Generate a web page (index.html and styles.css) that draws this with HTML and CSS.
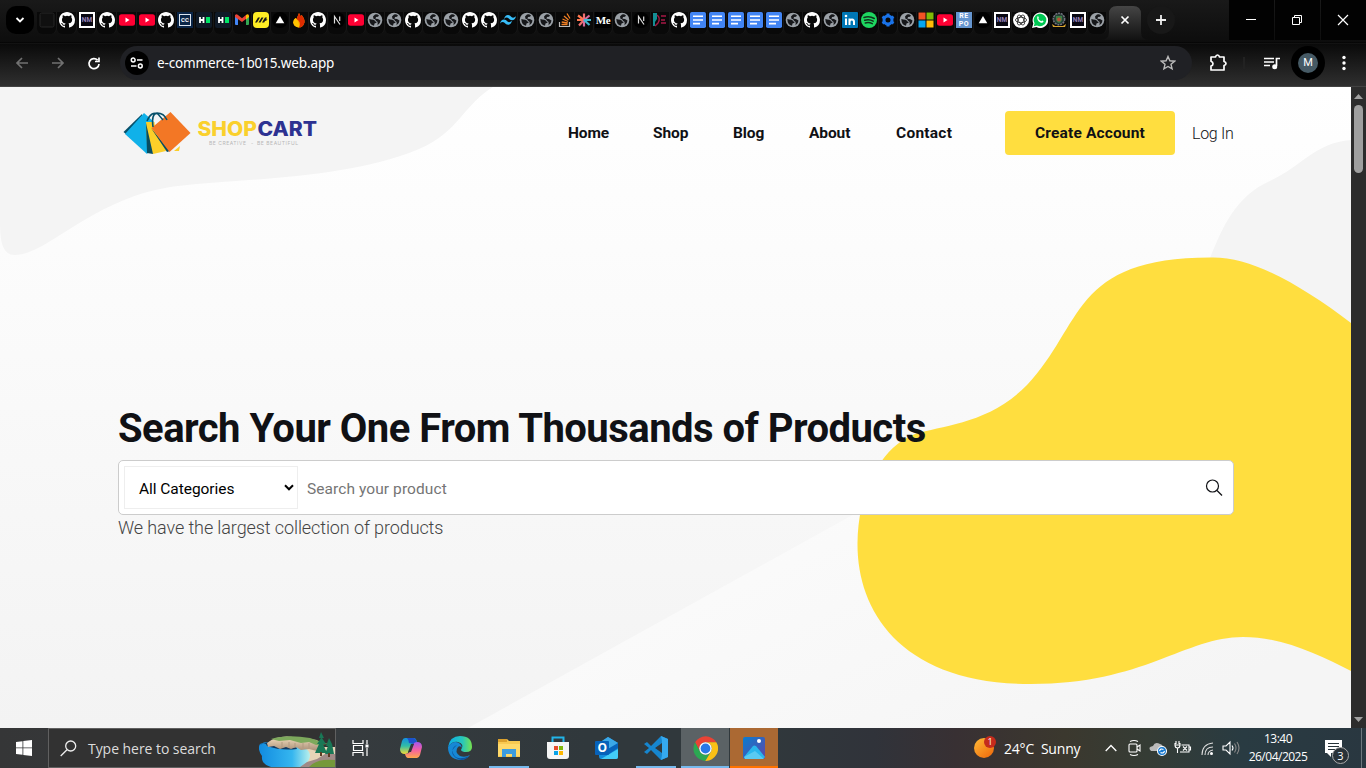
FILE: index.html
```html
<!DOCTYPE html>
<html lang="en">
<head>
<meta charset="utf-8">
<title>ShopCart</title>
<link rel="stylesheet" href="styles.css">
</head>
<body>
<svg class="defs" aria-hidden="true">
  <symbol id="gh" viewBox="0 0 16 16"><path fill="#fff" d="M8 0C3.58 0 0 3.58 0 8c0 3.54 2.29 6.53 5.47 7.59.4.07.55-.17.55-.38v-1.49c-2.01.37-2.53-.49-2.69-.94-.09-.23-.48-.94-.82-1.13-.28-.15-.68-.52-.01-.53.63-.01 1.08.58 1.23.82.72 1.21 1.87.87 2.33.66.07-.52.28-.87.51-1.07-1.78-.2-3.64-.89-3.64-3.95 0-.87.31-1.59.82-2.15-.08-.2-.36-1.02.08-2.12 0 0 .67-.21 2.2.82a7.7 7.7 0 0 1 4 0c1.53-1.04 2.2-.82 2.2-.82.44 1.1.16 1.92.08 2.12.51.56.82 1.27.82 2.15 0 3.07-1.87 3.75-3.65 3.95.29.25.54.73.54 1.48v2.19c0 .21.15.46.55.38A8 8 0 0 0 16 8c0-4.42-3.58-8-8-8z"/></symbol>
  <symbol id="globe" viewBox="0 0 16 16"><circle cx="8" cy="8" r="7.3" fill="#9aa0a6"/><path d="M2.300 7q2 .8 4 .8 1.700 0 1.700 1.500 2 0 1.500 1.500l-2 .6-.5 2.300Q2.500 13 2.300 7zM8 2.500q2-.8 4 1l-1 1.300-2 .2-.5 1.700 2.500.3 2.500 1.500q-.2 3.500-3 4.800l.2-2.600q-.2-1.500-1.700-2L8 7.200 6.500 6.700 6 4.500z" fill="#16171a"/></symbol>
  <symbol id="yt" viewBox="0 0 16 16"><rect y="2.300" width="16" height="11.500" rx="2.500" fill="#ff0033"/><path d="M6.500 5.500v5l4-2.500z" fill="#fff"/></symbol>
  <symbol id="hh" viewBox="0 0 16 16"><rect width="16" height="16" rx="2" fill="#0f1a27"/><path d="M4 5v6M7.500 5v6M4 8h3.500" stroke="#fff" stroke-width="1.800"/><path d="M10 5h4v6h-4z" fill="#00e566"/></symbol>
  <symbol id="gmail" viewBox="0 0 16 16"><path fill="#4285f4" d="M1 3h3v10H2q-1 0-1-1z"/><path fill="#34a853" d="M12 4h3v8q0 1-1 1h-2z"/><path fill="#ea4335" d="M1 3.500Q2 1.500 4 3l4 3.200L12 3v4L8 10 1 5z"/><path fill="#fbbc04" d="m12 3q2-1.500 3 .5V5l-3 2.500z"/></symbol>
  <symbol id="yel" viewBox="0 0 16 16"><rect width="16" height="16" rx="4" fill="#ffed24"/><path d="m2 10.500 3-5h2l-3 5zm3.500 0 3-5h2l-3 5zm3.500 0 3-5h2l-1 2 1.500-.5-1 1.500-1.500.4-.8 1.600z" fill="#171717"/></symbol>
  <symbol id="tri" viewBox="0 0 16 16"><circle cx="8" cy="8" r="8" fill="#000"/><path d="M8 4l4.300 7.300H3.700z" fill="#fff"/></symbol>
  <symbol id="fire" viewBox="0 0 16 16"><path d="M8 1q1 1.500 1.200 3l1.500-1Q14 7 13.500 10.500 12 15.500 8 15.500 3 15 2.200 10.500 2.500 7 4.500 6l1 1z" fill="#ff9100"/><path d="M8 1q1 1.500 1.200 3l1.500-1Q14 7 13.500 10.500 12 15.500 8 15.500 11 10 5.500 7z" fill="#dd2c00"/><path d="M4.500 6Q9 10 8 15.500 3 15 2.200 10.500 2.500 7 4.500 6z" fill="#ffc400"/></symbol>
  <symbol id="next" viewBox="0 0 16 16"><circle cx="8" cy="8" r="8" fill="#000"/><path d="M5.500 11.500v-7L11 12.500M10.700 4.500V9" stroke="#ddd" stroke-width="1.200" fill="none"/></symbol>
  <symbol id="tw" viewBox="0 0 16 16"><path fill="#38bdf8" d="M4 7q1-4 4-4 2 0 3.500 2 1.800 1.800 4.500-.7-1 4-4 4-2 0-3.500-2Q6.500 4.500 4 7zM0 11.500q1-4 4-4 2 0 3.500 2 1.800 1.800 4.500-.7-1 4-4 4-2 0-3.500-2Q2.500 9 0 11.500z"/></symbol>
  <symbol id="so" viewBox="0 0 16 16"><path d="M2.500 10v4.500h10V10" fill="none" stroke="#bcbbbb" stroke-width="1.200"/><path d="M4.500 12.500h6M4.700 10l6 1M5.500 7l5.500 2.500M7 4l4.500 4M10 1.500l3 5" stroke="#f48024" stroke-width="1.300"/></symbol>
  <symbol id="ast" viewBox="0 0 16 16"><g stroke-width="2.200"><path d="M8 8 2 3.500M8 8H1" stroke="#ff7850"/><path d="M8 8 3 13.500M8 8V1.500" stroke="#f07070"/><path d="M8 8v6.500M8 8l5.500-4.500" stroke="#d86a9c"/><path d="M8 8h7M8 8l5.500 5" stroke="#40b6cf"/></g></symbol>
  <symbol id="duo" viewBox="0 0 16 16"><path d="M1 1h4v6l-2 3v4H1z" fill="#148e94"/><path d="M5 3q4 3 1 8l-3 3M9 4h5M9 8h4M9 11h5" stroke="#a71945" fill="none" stroke-width="1.400"/></symbol>
  <symbol id="doc" viewBox="0 0 16 16"><rect width="16" height="16" rx="1.800" fill="#4285f4"/><path d="M3 4.300h10M3 8h10M3 11.600h7" stroke="#fff" stroke-width="1.600"/></symbol>
  <symbol id="li" viewBox="0 0 16 16"><rect width="16" height="16" rx="1" fill="#0077b5"/><path d="M4 6.500V13M7.500 6.500V13M7.500 9.500Q8 7.500 10 7.500q2 0 2 2.500v3" stroke="#fff" stroke-width="2" fill="none"/><circle cx="4" cy="4" r="1.300" fill="#fff"/></symbol>
  <symbol id="sp" viewBox="0 0 16 16"><circle cx="8" cy="8" r="8" fill="#1ed760"/><path d="M3 5.500q5.500-1.700 10.300 1M3.700 8.300q4.500-1.500 8.500.9M4.300 11q3.500-1.200 7 .7" stroke="#10331c" stroke-width="1.500" fill="none" stroke-linecap="round"/></symbol>
  <symbol id="gear" viewBox="0 0 16 16"><circle cx="8" cy="8" r="4" fill="none" stroke="#1a73e8" stroke-width="3"/><path d="M6.500 1.500h3v3h-3zM6.500 11.500h3v3h-3z" fill="#1a73e8"/><path d="M6.500 1.500h3v3h-3zM6.500 11.500h3v3h-3z" fill="#1a73e8" transform="rotate(60 8 8)"/><path d="M6.500 1.500h3v3h-3zM6.500 11.500h3v3h-3z" fill="#1a73e8" transform="rotate(120 8 8)"/></symbol>
  <symbol id="ms" viewBox="0 0 16 16"><path fill="#f35325" d="M.5.5h7v7h-7z"/><path fill="#81bc06" d="M8.500.5h7v7h-7z"/><path fill="#05a6f0" d="M.5 8.500h7v7h-7z"/><path fill="#ffba08" d="M8.500 8.500h7v7h-7z"/></symbol>
  <symbol id="ai" viewBox="0 0 16 16"><circle cx="8" cy="8" r="8" fill="#fff"/><g fill="none" stroke="#222" stroke-width=".8"><ellipse cx="8" cy="8" rx="5.500" ry="2.700"/><ellipse cx="8" cy="8" rx="5.500" ry="2.700" transform="rotate(60 8 8)"/><ellipse cx="8" cy="8" rx="5.500" ry="2.700" transform="rotate(120 8 8)"/></g></symbol>
  <symbol id="wa" viewBox="0 0 16 16"><path d="M0 16l1.300-4.500A7.800 7.800 0 1 1 4.500 15z" fill="#fff"/><path d="M1.800 14.200l.8-3A6.300 6.300 0 1 1 5 13.500z" fill="#00c853"/><path d="M5.300 4.500q1.500-.8 1.500 1.500-1.500 1 2.500 3.300 1-1.500 2.300 0-.8 2.500-3.600 1Q4.500 8.300 5.300 4.500z" fill="#fff"/></symbol>
  <symbol id="crest" viewBox="0 0 16 16"><circle cx="8" cy="7" r="5.700" fill="#263d36" stroke="#73727e" stroke-width="1.500" stroke-dasharray="2 .8"/><path d="M5 4h6v4q-1 3-3 3T5 8z" fill="#3c7f45"/><circle cx="8" cy="7.500" r="2" fill="#b84f36"/><path d="M1 12l3 2h8l3-2-1 3H2z" fill="#d8a32f"/></symbol>
  <symbol id="empty" viewBox="0 0 16 16"><rect x="1" y="1" width="14" height="14" rx="1.500" fill="#101010" stroke="#262626"/></symbol>
</svg>

<div class="tabstrip">
  <div class="tabsearch"><svg width="10" height="6" viewBox="0 0 10 6"><path d="M1.500 1 5 4.500 8.500 1" stroke="#fff" stroke-width="1.800" fill="none"/></svg></div>
  <div class="tabs">
    <div class="tab wide"><svg><use href="#empty"/></svg></div><div class="tab wide"><svg><use href="#gh"/></svg></div><div class="tab wide"><span class="fav nm">NM</span></div><div class="tab wide"><svg><use href="#gh"/></svg></div><div class="tab wide"><svg><use href="#yt"/></svg></div><div class="tab wide"><svg><use href="#yt"/></svg></div>
    <div class="tab"><svg><use href="#gh"/></svg></div><div class="tab"><span class="fav cc">CC</span></div><div class="tab"><svg><use href="#hh"/></svg></div><div class="tab"><svg><use href="#hh"/></svg></div><div class="tab"><svg><use href="#gmail"/></svg></div><div class="tab"><svg><use href="#yel"/></svg></div><div class="tab"><svg><use href="#tri"/></svg></div><div class="tab"><svg><use href="#fire"/></svg></div><div class="tab"><svg><use href="#gh"/></svg></div><div class="tab"><svg><use href="#next"/></svg></div>
    <div class="tab"><svg><use href="#yt"/></svg></div><div class="tab"><svg><use href="#globe"/></svg></div><div class="tab"><svg><use href="#globe"/></svg></div><div class="tab"><svg><use href="#gh"/></svg></div><div class="tab"><svg><use href="#globe"/></svg></div><div class="tab"><svg><use href="#globe"/></svg></div><div class="tab"><svg><use href="#gh"/></svg></div><div class="tab"><svg><use href="#gh"/></svg></div><div class="tab"><svg><use href="#tw"/></svg></div><div class="tab"><svg><use href="#globe"/></svg></div>
    <div class="tab"><svg><use href="#globe"/></svg></div><div class="tab"><svg><use href="#so"/></svg></div><div class="tab"><svg><use href="#ast"/></svg></div><div class="tab"><span class="fav me">Me</span></div><div class="tab"><svg><use href="#globe"/></svg></div><div class="tab"><svg><use href="#next"/></svg></div><div class="tab"><svg><use href="#duo"/></svg></div><div class="tab"><svg><use href="#gh"/></svg></div><div class="tab"><svg><use href="#doc"/></svg></div><div class="tab"><svg><use href="#doc"/></svg></div>
    <div class="tab"><svg><use href="#doc"/></svg></div><div class="tab"><svg><use href="#doc"/></svg></div><div class="tab"><svg><use href="#doc"/></svg></div><div class="tab"><svg><use href="#globe"/></svg></div><div class="tab"><svg><use href="#gh"/></svg></div><div class="tab"><svg><use href="#globe"/></svg></div><div class="tab"><svg><use href="#li"/></svg></div><div class="tab"><svg><use href="#sp"/></svg></div><div class="tab"><svg><use href="#gear"/></svg></div><div class="tab"><svg><use href="#globe"/></svg></div>
    <div class="tab"><svg><use href="#ms"/></svg></div><div class="tab"><svg><use href="#yt"/></svg></div><div class="tab"><span class="fav repo">RE<br>PO</span></div><div class="tab"><svg><use href="#tri"/></svg></div><div class="tab"><span class="fav nm">NM</span></div><div class="tab"><svg><use href="#ai"/></svg></div><div class="tab"><svg><use href="#wa"/></svg></div><div class="tab"><svg><use href="#crest"/></svg></div><div class="tab"><span class="fav nm">NM</span></div><div class="tab"><svg><use href="#globe"/></svg></div>
  </div>
  <svg class="active" width="48" height="38" viewBox="0 0 48 38"><defs><linearGradient id="ag" x2="0" y2="1"><stop stop-color="#454545"/><stop offset="1" stop-color="#111"/></linearGradient></defs><path d="M0 34q8 0 8-8V8q0-8 8-8h16q8 0 8 8v18q0 8 8 8z" fill="url(#ag)"/><path d="M20.500 10.500l7 7m0-7-7 7" stroke="#fff" stroke-width="1.700"/></svg>
  <div class="newtab"><svg width="12" height="12" viewBox="0 0 12 12"><path d="M6 1v10M1 6h10" stroke="#eee" stroke-width="1.800"/></svg></div>
  <div class="winbtns">
    <b><svg width="12" height="12"><path d="M1 5.500h10" stroke="#fff"/></svg></b>
    <b><svg width="12" height="12"><path d="M1.500 3.500h7v7h-7zM3.500 3.500v-2h7v7h-2" fill="none" stroke="#fff"/></svg></b>
    <b><svg width="12" height="12"><path d="M1 1l10 10M11 1 1 11" stroke="#fff" stroke-width="1.200"/></svg></b>
  </div>
</div>

<div class="toolbar">
  <svg class="arrows" width="110" height="16" viewBox="0 0 110 16" fill="none" stroke-width="1.700"><path d="M15 8H4M9 3 4 8l5 5M39 8h11M45 3l5 5-5 5" stroke="#717171"/><path d="M84.600 5.200A5 5 0 1 0 86 9M86 2.500v4h-4" stroke="#fff"/></svg>
  <div class="omnibox">
    <span class="site"><svg width="14" height="14" viewBox="0 0 14 14" fill="none" stroke="#fff" stroke-width="1.500"><circle cx="3.200" cy="4" r="1.900"/><path d="M7 4h5.500M1 10h5.500"/><circle cx="10.300" cy="10" r="1.900"/></svg></span>
    <span class="url">e-commerce-1b015.web.app</span>
    <svg width="16" height="16" viewBox="0 0 16 16"><path d="M8 1.500l1.900 4.300 4.700.4-3.600 3.100 1.100 4.600L8 11.500l-4.100 2.400L5 9.300 1.400 6.200l4.700-.4z" fill="none" stroke="#bbb" stroke-width="1.400"/></svg>
  </div>
  <svg class="ext" width="18" height="18" viewBox="0 0 18 18"><path d="M2 3h4.500q.5-2 2-2t2 2H15v4.500q2 .5 2 2t-2 2V16H2v-4q2-.5 2-2.300T2 7.200z" fill="none" stroke="#fff" stroke-width="1.700" stroke-linejoin="round"/></svg>
  <span class="sep"></span>
  <svg class="media" width="16" height="14" viewBox="0 0 16 14"><path d="M0 2.500h10M0 6h10M0 9.500h6M12.500 10V2.500H16" fill="none" stroke="#fff" stroke-width="1.700"/><circle cx="10.700" cy="10.700" r="2.500" fill="#fff"/></svg>
  <span class="avatar"><em>M</em></span>
  <svg width="4" height="16" viewBox="0 0 4 16" fill="#fff"><circle cx="2" cy="2.500" r="1.700"/><circle cx="2" cy="8" r="1.700"/><circle cx="2" cy="13.500" r="1.700"/></svg>
</div>

<div class="viewport">
  <main class="page">
    <svg class="backdrop" viewBox="0 87 1351 641">
      <defs><linearGradient id="dg" x1=".3" y1=".45" x2=".75" y2="1"><stop stop-color="#fcfcfc"/><stop offset="1" stop-color="#f5f5f5"/></linearGradient></defs>
      <path fill="url(#dg)" d="M468 728 894 492 1351 240V728z"/>
      <path fill="#f4f4f4" d="M0 87H493C463 105 459 132 419 149C347 179 250 178 178 186C94 196 48 255 15 255C3 255 0 243 0 222zM1351 140C1315 143 1302 166 1270 181C1235 196 1222 229 1210 258V330H1351z"/>
      <path fill="#ffde3f" d="M1351 323C1302 286 1253 257 1212 257.500C1071 257 1084 325 1027 385C989 424 943 425 915 434C883 446 858 488 857.500 543C857 612 902 684 1031 684C1144 684 1185 637 1243 637C1283 637 1319 655 1351 671z"/>
    </svg>
    <header class="site-header">
      <svg class="logo" width="200" height="50" viewBox="118 108 200 50">
        <path d="M123.500 132 142 114v34z" fill="#07506a"/><path d="M144 113l19 17-16 24-22-20z" fill="#10b1e9"/>
        <path d="M146 122h13l7 29-13 3-6-11z" fill="#fbcf29"/><path d="M146 123l7 31-6-1zM151 128l19 23-3 1z" fill="#084d61"/><path d="M174 151l6-5-1 5z" fill="#fbcf29"/>
        <path d="M154 116l6-4 9 8-14 8z" fill="#f4f4f4"/>
        <path d="M170.500 112l20 21-21 19-18-24z" fill="#f37725"/>
        <path d="M147 121q4-10 11-7l5 6M153 127q-2-13 4-14 7 0 10 7" fill="none" stroke="#07506a" stroke-width="1.500"/>
        <g font-family="Inter" font-weight="800" font-size="19.500"><text x="197.500" y="136" fill="#fad02c" textLength="59.500" lengthAdjust="spacingAndGlyphs">SHOP</text><text x="257.500" y="136" fill="#2d3291" textLength="59.500" lengthAdjust="spacingAndGlyphs">CART</text></g>
        <g font-family="Inter" font-size="5" fill="#b7b7b7"><text x="209" y="145" textLength="37">BE CREATIVE</text><text x="251" y="145">-</text><text x="257" y="145" textLength="41">BE BEAUTIFUL</text></g>
      </svg>
      <nav><a>Home</a><a>Shop</a><a>Blog</a><a>About</a><a class="contact">Contact</a></nav>
      <button class="create">Create Account</button>
      <a class="login">Log In</a>
    </header>
    <section class="hero">
      <h1>Search Your One From Thousands of Products</h1>
      <div class="search">
        <div class="select"><span>All Categories</span><svg width="10" height="7" viewBox="0 0 10 7"><path d="M1 1.300 5 5.300 9 1.300" fill="none" stroke="#000" stroke-width="2"/></svg></div>
        <span class="placeholder">Search your product</span>
        <svg width="18" height="18" viewBox="0 0 18 18" fill="none" stroke="#101115" stroke-width="1.200"><circle cx="7.500" cy="7" r="6"/><path d="m12 11.500 5 5"/></svg>
      </div>
      <p>We have the largest collection of products</p>
    </section>
  </main>
  <div class="scrollbar"><svg width="9" height="5"><path d="M0 5 4.500 0 9 5z" fill="#a0a0a0"/></svg><div class="thumb"></div><svg width="9" height="5"><path d="M0 0h9L4.500 5z" fill="#a0a0a0"/></svg></div>
</div>

<footer class="taskbar">
  <div class="start"><svg width="16" height="16" viewBox="0 0 16 16"><path d="M0 2l6.500-.8v6.300H0zM7.300 1 16 0v7.500H7.300zM0 8.300h6.500v6.500L0 14zM7.300 8.300H16V16l-8.700-1z" fill="#fff"/></svg></div>
  <div class="winsearch">
    <svg width="17" height="17" viewBox="0 0 17 17" fill="none" stroke="#eee" stroke-width="1.300"><circle cx="10.700" cy="6" r="5"/><path d="M7 9.700.7 16"/></svg>
    <span>Type here to search</span>
    <svg class="scene" width="76" height="38" viewBox="0 0 76 38">
      <defs><linearGradient id="lake"><stop stop-color="#118be0"/><stop offset=".65" stop-color="#35b6ef"/><stop offset="1" stop-color="#b8f0ec"/></linearGradient><linearGradient id="cliff" x2="0" y2="1"><stop stop-color="#f4dfbf"/><stop offset="1" stop-color="#a78d76"/></linearGradient></defs>
      <path d="M35 18h41v20H35z" fill="#e7d5b7"/><path d="M1 15q10-5 16 2l27 1q14 7 0 20H12Q2 35 3 27-2 20 1 15z" fill="url(#lake)"/><path d="M0 16q7-4 8 1 14 5 30 3l-1-2-28-5z" fill="#123a61"/>
      <path d="M8 14Q18 6 34 8l24 3 5 7-5 4-8-2-8 1-5-3-5 2-5-2-6 2-6-3-6 1z" fill="url(#cliff)"/><path d="M12 10Q28 5 51 9l18 6-12 1-7-3-8 1-11-3-11 1z" fill="#7da95c"/>
      <path d="M23 13v6m7-6v6m6-5v5m8-5v5m6-5v5" stroke="#b19a80"/><path d="M41 38l7-5 10-3 8-5h10v13z" fill="#a08a86"/><path d="M50 38q8-9 26-7v7z" fill="#75993a"/>
      <path d="M62 3l3 6h-2l4 6h-3l4 9H56l4-9h-2l4-6h-2zM70 9l3 6 2 10h-9l3-8h-2z" fill="#197856"/><path d="M62 23v4m8-3v4" stroke="#5d3d25" stroke-width="2"/>
    </svg>
  </div>
  <div class="app first"><svg width="18" height="16" viewBox="0 0 18 16" fill="none" stroke="#fff" stroke-width="1.200"><path d="M1 0v3.500h10V0M1 16v-3.500h10V16M1.500 5.500h9v5h-9zM15 0v4M15 8v8"/><path d="M13.500 6h3" stroke-width="3"/></svg></div>
  <div class="app">
    <svg width="24" height="24" viewBox="0 0 24 24"><defs><linearGradient id="cpa" x2="0" y2="1"><stop stop-color="#128fe0"/><stop offset=".5" stop-color="#32bda5"/><stop offset="1" stop-color="#f3dc37"/></linearGradient><linearGradient id="cpb" x2="0" y2="1"><stop stop-color="#a455ed"/><stop offset=".5" stop-color="#f561a1"/><stop offset="1" stop-color="#ffa84b"/></linearGradient></defs><path d="M6 2h9q2 0 3 4l-4 1-4 8q-1 3-4 3-5 0-5-5l2-8q1-3 3-3z" fill="url(#cpa)"/><path d="M14 2q3 0 4 5l-3 1-5-1q0-3-2-5z" fill="#1d52cc"/><path d="M18 22h-9q-2 0-3-4l4-1 4-8q1-3 4-3 5 0 5 5l-2 8q-1 3-3 3z" fill="url(#cpb)"/><path d="M9 16l3-8h3l-3 8z" fill="#30383c"/></svg></div>
  <div class="app"><svg width="26" height="26" viewBox="0 0 26 26"><defs><linearGradient id="eg"><stop stop-color="#0caeea"/><stop offset=".6" stop-color="#27c6bc"/><stop offset="1" stop-color="#76e44f"/></linearGradient></defs><path d="M1 12Q3 1 13 1q12 0 12 11 0 5-6 5-4 0-5-2 4-6-3-8Q5 6 1 12z" fill="url(#eg)"/><path d="M1 12Q6 5 12 8q3 2 3 5-2-3-4-1-4 5 2 9 5 2 10-1-4 5-10 5Q1 24 1 12z" fill="#1688d5"/><path d="M10 10q-7 3-3 10 4 6 15 1-5 6-11 3Q0 18 10 10z" fill="#0d559f"/></svg></div>
  <div class="app line"><svg width="24" height="22" viewBox="0 0 24 22"><path d="M1 2h9l2 2h11v16H1z" fill="#f8c951"/><path d="M1 2h9v3H1z" fill="#dca12d"/><path d="M1 7h22v12H1z" fill="#ffd96a"/><path d="M5 20v-8h14v8h-4v-3H9v3z" fill="#3d9cdf"/></svg></div>
  <div class="app"><svg width="24" height="24" viewBox="0 0 24 24"><path d="M6.500 7V1.500h11V7" fill="none" stroke="#22b4e8" stroke-width="2"/><path d="M1 6h22v14q0 3-3 3H4q-3 0-3-3z" fill="#f5f5f5"/><path d="M8 10h4v4H8z" fill="#e84c2a"/><path d="M13 10h4v4h-4z" fill="#81b90b"/><path d="M8 15h4v4H8z" fill="#08a2e8"/><path d="M13 15h4v4h-4z" fill="#ffb800"/></svg></div>
  <div class="app"><svg width="26" height="24" viewBox="0 0 26 24"><path d="M5 7 14 1l10 6v14q0 2-2 2H7q-2 0-2-3z" fill="#138ddd"/><path d="M14 1l10 6-9 7H8V5z" fill="#3ba8e8"/><path d="M24 7v6L7 23h15q2 0 2-2z" fill="#43cdf7"/><path d="M24 7v5l-9 6-3-4z" fill="#0763bb"/><rect x="1" y="5" width="14" height="14" rx="1" fill="#0762b9"/><text x="3.500" y="16" font-size="12" font-weight="700" fill="#fff">O</text></svg></div>
  <div class="app line"><svg width="24" height="24" viewBox="0 0 24 24"><path d="M17 0l7 3v18l-7 3L7 14l-4 4-3-2 5-4-5-4 3-2 4 4zM18 7l-7 5 7 5z" fill="#1686cf"/><path d="M17 0l7 3v18l-7 3 1-5V5z" fill="#35a9ef"/></svg></div>
  <div class="app chrome"><svg width="25" height="25" viewBox="0 0 24 24"><path d="M2 6a12 12 0 0 1 20.400 0H12a6 6 0 0 0-5.200 9z" fill="#ea4335"/><path d="M2 6a12 12 0 0 0 9.800 18l5.400-9A6 6 0 0 1 6.800 15z" fill="#2ca852"/><path d="M22.400 6a12 12 0 0 1-10.600 18l5.400-9A6 6 0 0 0 12 6z" fill="#fbc116"/><circle cx="12" cy="12" r="6" fill="#fff"/><circle cx="12" cy="12" r="4.700" fill="#2878e8"/></svg></div>
  <div class="app photos"><svg width="22" height="22" viewBox="0 0 22 22"><defs><linearGradient id="pg" x2="1" y2="1"><stop stop-color="#087dd2"/><stop offset="1" stop-color="#6246a6"/></linearGradient></defs><rect width="22" height="22" rx="2" fill="url(#pg)"/><path d="M1 20 10 9q1-1 3 0l9 11-2 2H2z" fill="#29b6ed"/><path d="M1 20 12 14l9 8H2z" fill="#82daf5" opacity=".55"/><circle cx="16" cy="4" r="2" fill="#fff"/></svg></div>
  <div class="tray">
    <span class="sun"><b>1</b></span><span class="weather">24°C&nbsp; Sunny</span>
    <svg class="chev" width="12" height="8"><path d="M.7 7 6 1.500 11.300 7" fill="none" stroke="#fff" stroke-width="1.300"/></svg>
    <svg class="sys" width="114" height="18" viewBox="0 0 114 18" fill="none" stroke="#fff" stroke-width="1.100"><rect x="3" y="5" width="8" height="8" rx="1"/><path d="M11 8l3-2v6l-3-2M4 2.500q4-2 8 0M4 15.500q4 2 8 0"/><path d="M25 12q-4-4 2-5 2-5 7-2 4 1 4 7z" fill="#bbb" stroke="none"/><circle cx="36" cy="12" r="4.500" fill="#1679d0" stroke="#fff"/><path d="M33.500 12q1-3 4-1.500M38.500 12q-1 3-4 1.500"/><path d="M49 4v2h5V4M50 2v3m3-3v3m-4 1q0 3 2.500 3T54 6m-2.500 3v5M55.500 6H63v7h-9M63 8h1.500v3H63M57 7.500l4 4m0-4-4 4"/><path d="M76 16q0-11 11-12M79 16q0-8 8-8M82 16q0-4 5-5" stroke="#ddd"/><circle cx="85.500" cy="14.500" r="1.500" fill="#fff" stroke="none"/><path d="M97 7h3l4-4v12l-4-4h-3zM106 6.500q2 2.500 0 5"/><path d="M108.500 4.500q3 4.500 0 9M111 3q4 6 0 12" stroke="#888"/></svg>
    <span class="clock">13:40<br>26/04/2025</span>
    <span class="note"><svg width="17" height="17" viewBox="0 0 17 17"><path d="M0 0h17v13H6v4l-4-4H0z" fill="#fff"/><path d="M3 3.500h11M3 6.500h11M3 9.500h7" stroke="#263238" stroke-width="1.200"/></svg><b>3</b></span>
    <span class="peek"></span>
  </div>
</footer>
</body>
</html>
```
FILE: styles.css
```css
* { box-sizing: border-box; }
body { margin: 0; width: 1366px; height: 768px; overflow: hidden; font-family: "Open Sans", sans-serif; background: #222; }
svg { display: block; flex: none; }
.defs { position: absolute; width: 0; height: 0; }

/* Browser frame */
.tabstrip { height: 44px; display: flex; background: linear-gradient(#191919, #0d0d0d 42px, #000 43px, #252525 44px); }
.tabsearch { width: 28px; height: 28px; margin: 6px 0 0 6px; border-radius: 10px; background: #000; display: grid; place-items: center; }
.tabs { display: flex; margin: 12px 0 0 3px; height: 22px; width: 1070px; }
.tab { width: 19px; height: 22px; flex: none; border-radius: 0 0 6px 6px; background: #090909; border-right: 1px solid #181818; padding-left: 1px; }
.tabs .wide { width: 20px; padding-left: 2px; }
.tabs svg { width: 16px; height: 16px; }
.fav { display: block; width: 16px; height: 16px; text-align: center; color: #fff; font-family: Roboto, sans-serif; font-weight: 700; white-space: nowrap; }
.nm { border: 2px solid #fff; background: #090812; color: #9683bb; font-size: 6.500px; line-height: 12px; }
.cc { background: #0a2547; border: 2px solid #0a2547; outline: 1px solid #dce5ef; outline-offset: -3px; font-size: 6px; line-height: 12px; }
.me { background: #000; font: 700 11px/16px "Liberation Serif", serif; letter-spacing: -.5px; }
.repo { background: #6595cf; font-size: 7px; line-height: 8px; letter-spacing: .5px; }
.active { margin: 6px 0 0 -6px; }
.newtab { width: 28px; height: 28px; border-radius: 50%; background: #181818; display: grid; place-items: center; margin: 6px 0 0 -2px; }
.winbtns { margin-left: auto; display: flex; gap: 1px; }
.winbtns b { width: 45px; height: 40px; padding-right: 2px; background: #020202; display: grid; place-items: center; }
.toolbar { height: 43px; display: flex; align-items: center; padding: 0 20px 5px 13px; background: linear-gradient(#0a0a0a, #2f2f2f); border-bottom: 1px solid #424242; }
.omnibox { margin-left: -3px; width: 1072px; height: 34px; border-radius: 17px; background: #202125; display: flex; align-items: center; padding: 0 16px 0 5px; color: #fff; font-size: 13.500px; }
.site { width: 24px; height: 24px; border-radius: 50%; background: #000; display: grid; place-items: center; margin-right: 8px; }
.url { flex: 1; font-family: "Noto Sans", sans-serif; letter-spacing: -.13px; }
.ext { margin-left: 17px; }
.sep { width: 2px; height: 12px; background: #222; margin: 0 19px 0 16px; }
.media { margin-right: 11px; }
.avatar { width: 34px; height: 34px; border-radius: 50%; background: #000; display: grid; place-items: center; margin-right: 17px; }
.avatar em { width: 20px; height: 20px; border-radius: 50%; background: #465a65; color: #fff; font: 11px/20px Roboto, sans-serif; text-align: center; }

/* Store page */
.viewport { height: 641px; display: flex; }
.page { width: 1351px; position: relative; background: linear-gradient(#fff, #f3f3f3); color: #101115; font-family: Roboto, sans-serif; }
.backdrop { position: absolute; inset: 0; width: 1351px; height: 641px; }
.site-header, .hero { position: relative; }
.site-header { height: 92px; padding-left: 118px; display: flex; align-items: center; font-size: 16px; }
nav { margin-left: 250px; display: grid; grid-template-columns: 85px 80px 76px 87px 109px; font-weight: 700; font-size: 15.500px; letter-spacing: -.1px; }
.contact { letter-spacing: .25px; }
.create { width: 170px; height: 44px; border: 0; border-radius: 4px; background: #ffde3f; color: #101115; font: 700 15.500px Roboto, sans-serif; letter-spacing: .15px; padding: 0; }
.login { margin-left: 17px; font-weight: 300; letter-spacing: -.3px; }
.hero { padding: 225px 117px 0 118px; }
h1 { margin: 0; height: 56px; line-height: 50px; font-size: 40px; font-weight: 700; letter-spacing: -.53px; white-space: nowrap; }
.search { height: 55px; border: 1px solid #ccc; border-radius: 5px; background: #fff; display: flex; align-items: center; padding: 0 10px 0 5px; font-size: 15.500px; }
.select { width: 174px; height: 43px; border: 1px solid #eee; display: flex; align-items: center; justify-content: space-between; padding: 0 3px 0 14px; color: #000; }
.select span { padding-top: 2px; letter-spacing: -.05px; }
.placeholder { flex: 1; padding: 2px 0 0 9px; color: #757575; letter-spacing: .08px; }
.hero p { margin: 0; font-size: 18px; line-height: 26px; color: #444; font-weight: 300; letter-spacing: -.1px; }
.scrollbar { width: 15px; background: #2c2c2c; display: flex; flex-direction: column; align-items: center; padding: 7px 0 6px; }
.thumb { width: 9px; height: 68px; margin: 6px 0 auto; border-radius: 5px; background: #9f9f9f; }

/* Windows taskbar */
.taskbar { height: 40px; display: flex; color: #fff; background: linear-gradient(90deg, #353637, #363b3e 25%, #30383c 43%, #30383c 56%, #30333a 64%, #383033 70%, #3b382e 78%, #353c35 84%, #293b42 91%, #293740); }
.start { width: 48px; display: grid; place-items: center; }
.winsearch { width: 288px; border: 1px solid #606060; background: #323232; display: flex; align-items: center; padding-left: 11px; font-size: 14px; }
.winsearch span { width: 161px; margin-left: 11px; margin-right: 10px; flex: none; color: #dcdcdc; letter-spacing: -.05px; }
.app { width: 49px; border-left: 1px solid transparent; display: grid; place-items: center; }
.first { width: 50px; padding-right: 2px; }
.line { background: linear-gradient(#76b9ed, #76b9ed) 4px 38px / 40px 2px no-repeat; }
.chrome { background: linear-gradient(#76b9ed, #76b9ed) 0 38px / 48px 2px no-repeat padding-box, linear-gradient(#5b6265, #5b6265) padding-box; }
.photos { background: linear-gradient(#ff7200, #ff7200) 0 38px / 48px 2px no-repeat padding-box, linear-gradient(#ab6933, #ab6933) padding-box; }
.tray { margin-left: auto; width: 392px; display: flex; align-items: center; }
.sun { width: 20px; height: 20px; border-radius: 50%; background: linear-gradient(140deg, #ffbb38, #ed6509); position: relative; }
.sun b { position: absolute; right: -2px; top: -2px; width: 12px; height: 12px; border-radius: 50%; background: #c42b1c; font: 9px/12px "Open Sans", sans-serif; text-align: center; }
.weather { width: 78px; margin-left: 10px; font-size: 14px; letter-spacing: -.2px; white-space: nowrap; }
.chev { margin-left: 23px; }
.sys { margin-left: 9px; }
.clock { width: 76px; text-align: center; font-size: 12px; line-height: 18px; letter-spacing: -.5px; }
.note { margin-left: 9px; position: relative; }
.note b { position: absolute; left: 7px; top: 7px; width: 17px; height: 17px; border: 1px solid #aaa; border-radius: 50%; background: #293238; font: 11px/15px "Open Sans", sans-serif; text-align: center; }
.peek { width: 1px; height: 40px; margin-left: 19px; background: #6c777d; }
```
